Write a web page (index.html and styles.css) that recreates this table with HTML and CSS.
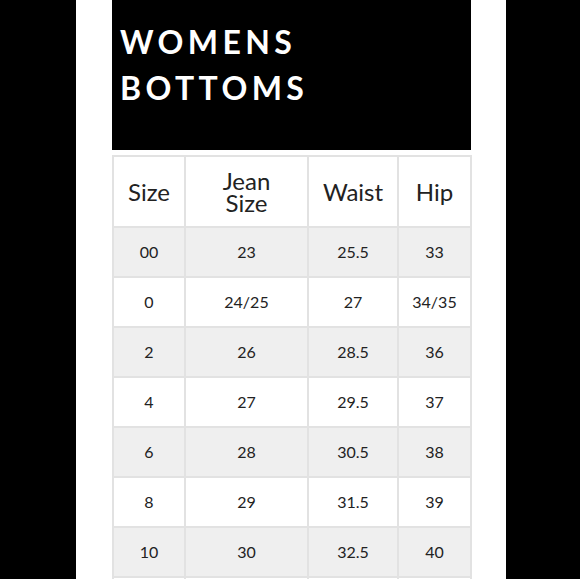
FILE: index.html
```html
<!DOCTYPE html>
<html>
<head>
<meta charset="utf-8">
<link rel="stylesheet" href="styles.css">
</head>
<body>
<div class="page">
  <div class="column">
    <div class="banner">
      <h1 class="title">WOMENS<br>BOTTOMS</h1>
    </div>
    <table class="chart">
      <thead>
        <tr><th class="c1">Size</th><th class="c2">Jean<br>Size</th><th class="c3">Waist</th><th class="c4">Hip</th></tr>
      </thead>
      <tbody>
        <tr class="alt"><td>00</td><td>23</td><td>25.5</td><td>33</td></tr>
        <tr><td>0</td><td>24/25</td><td>27</td><td>34/35</td></tr>
        <tr class="alt"><td>2</td><td>26</td><td>28.5</td><td>36</td></tr>
        <tr><td>4</td><td>27</td><td>29.5</td><td>37</td></tr>
        <tr class="alt"><td>6</td><td>28</td><td>30.5</td><td>38</td></tr>
        <tr><td>8</td><td>29</td><td>31.5</td><td>39</td></tr>
        <tr class="alt"><td>10</td><td>30</td><td>32.5</td><td>40</td></tr>
        <tr><td></td><td></td><td></td><td></td></tr>
      </tbody>
    </table>
  </div>
</div>
</body>
</html>
```
FILE: styles.css
```css
html, body {
  margin: 0;
  padding: 0;
  background: #000;
  height: 579px;
  overflow: hidden;
}
.page {
  display: flex;
  justify-content: flex-start;
  padding-left: 76px;
  height: 579px;
}
.column {
  width: 359px;
  background: #fff;
  padding: 0 35px 0 36px;
  height: 579px;
}
.banner {
  background: #000;
  width: 359px;
  height: 150px;
  box-sizing: border-box;
  padding: 19px 0 0 8px;
}
.title {
  margin: 0;
  font-family: Lato, "Open Sans", sans-serif;
  font-weight: 700;
  font-size: 32px;
  line-height: 46px;
  letter-spacing: 4.4px;
  color: #fff;
}
.chart {
  margin-top: 5px;
  width: 358px;
  border-collapse: collapse;
  table-layout: fixed;
  font-family: Lato, "Open Sans", sans-serif;
  color: #222;
  border: 2px solid #e2e2e2;
}
.chart th, .chart td {
  border: 2px solid #e2e2e2;
  text-align: center;
  padding: 0;
}
.chart th {
  font-weight: 400;
  font-size: 24px;
  line-height: 22px;
  height: 69px;
  background: #fff;
}
.chart td {
  font-size: 16px;
  height: 46px;
  padding-bottom: 2px;
  background: #fff;
}
.chart tr.alt td {
  background: #efefef;
}
.c1 { width: 70px; }
.c2 { width: 121px; }
.c3 { width: 88px; }
.c4 { width: 71px; }
```
